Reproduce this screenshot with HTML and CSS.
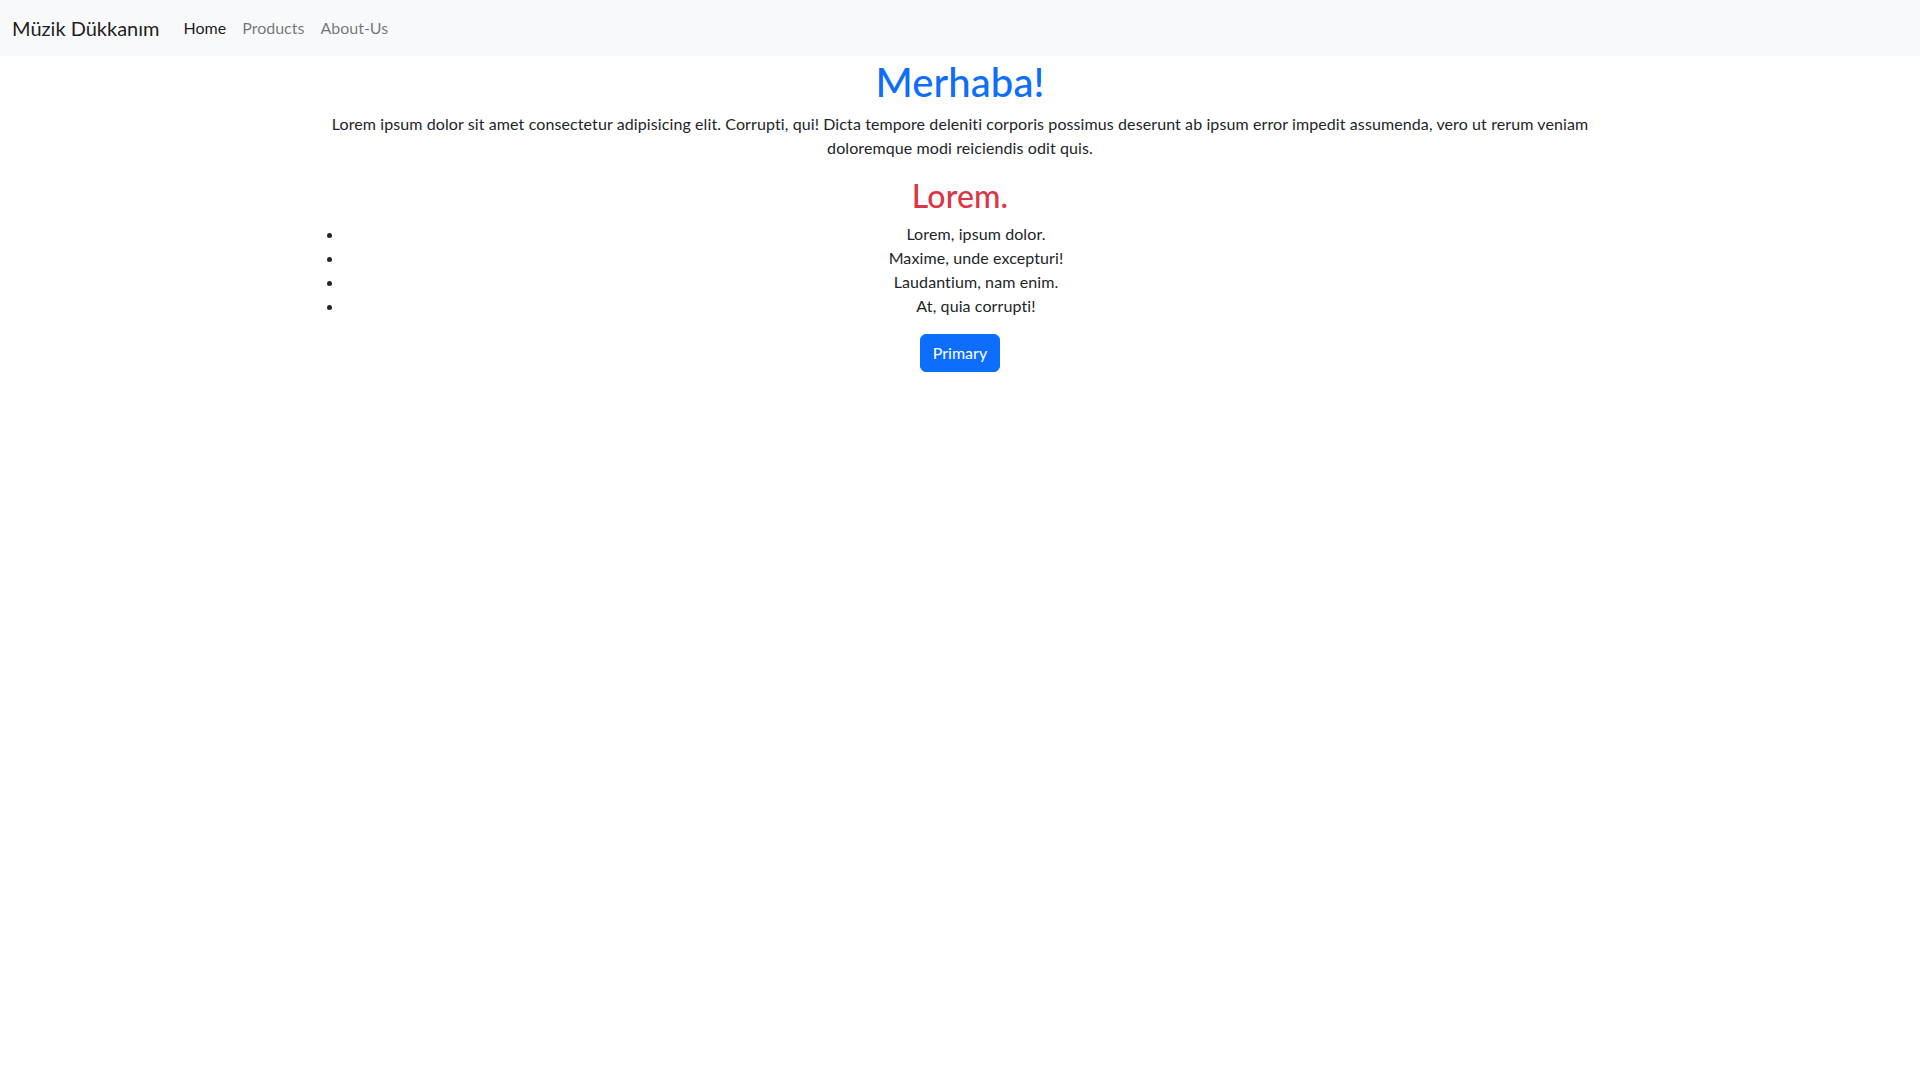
FILE: index.html
```html
<!DOCTYPE html>
<html lang="tr">
<head>
<meta charset="utf-8">
<title>Müzik Dükkanım</title>
<link rel="stylesheet" href="styles.css">
</head>
<body>
<nav class="navbar">
  <div class="navbar-inner">
    <a class="brand" href="#">Müzik Dükkanım</a>
    <ul class="nav">
      <li><a class="nav-link active" href="#">Home</a></li>
      <li><a class="nav-link" href="#">Products</a></li>
      <li><a class="nav-link" href="#">About-Us</a></li>
    </ul>
  </div>
</nav>
<main class="container">
  <h1 class="title">Merhaba!</h1>
  <p class="lead-text">Lorem ipsum dolor sit amet consectetur adipisicing elit. Corrupti, qui! Dicta tempore deleniti corporis possimus deserunt ab ipsum error impedit assumenda, vero ut rerum veniam doloremque modi reiciendis odit quis.</p>
  <h2 class="subtitle">Lorem.</h2>
  <ul class="items">
    <li>Lorem, ipsum dolor.</li>
    <li>Maxime, unde excepturi!</li>
    <li>Laudantium, nam enim.</li>
    <li>At, quia corrupti!</li>
  </ul>
  <div class="actions">
    <button class="btn-primary" type="button">Primary</button>
  </div>
</main>
</body>
</html>
```
FILE: styles.css
```css
* { box-sizing: border-box; }
html, body { margin: 0; padding: 0; }
body {
  font-family: "Segoe UI", Lato, "Noto Sans", sans-serif;
  font-size: 16px;
  line-height: 1.5;
  letter-spacing: 0.1px;
  color: #212529;
  background: #fff;
}
.navbar {
  background: #f8f9fa;
  padding: 8px 0;
  letter-spacing: 0;
}
.navbar-inner {
  display: flex;
  align-items: center;
  padding: 0 12px;
}
.brand {
  font-size: 20px;
  line-height: 30px;
  padding: 5px 0;
  margin-right: 16px;
  color: rgba(0,0,0,.9);
  text-decoration: none;
}
.nav {
  display: flex;
  list-style: none;
  margin: 0;
  padding: 0;
}
.nav-link {
  display: block;
  padding: 8px 8px;
  color: rgba(0,0,0,.55);
  text-decoration: none;
}
.nav-link.active { color: rgba(0,0,0,.9); }
.container {
  max-width: 1320px;
  margin: 0 auto;
  padding: 0 12px;
}
.title {
  margin: 0 0 6px;
  padding-top: 2px;
  font-size: 40px;
  font-weight: 500;
  line-height: 1.2;
  color: #0d6efd;
  text-align: center;
}
.lead-text {
  margin: 0 0 16px;
  text-align: center;
}
.subtitle {
  margin: 0 0 7px;
  padding-top: 1px;
  font-size: 32px;
  font-weight: 500;
  line-height: 1.2;
  color: #dc3545;
  text-align: center;
}
.items {
  margin: 0 0 16px;
  padding-left: 32px;
  text-align: center;
}
.actions {
  display: flex;
  justify-content: center;
}
.btn-primary {
  font-family: inherit;
  font-size: 16px;
  line-height: 24px;
  letter-spacing: 0;
  padding: 6px 12px;
  border: 1px solid #0d6efd;
  border-radius: 6px;
  background: #0d6efd;
  color: #fff;
  cursor: pointer;
}
```
